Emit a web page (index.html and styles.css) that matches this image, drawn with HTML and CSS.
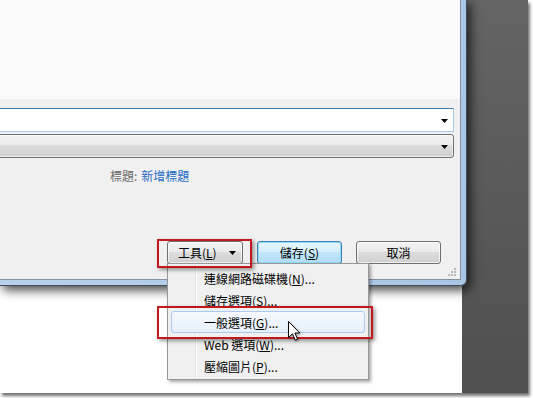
FILE: index.html
```html
<!DOCTYPE html>
<html lang="zh-Hant">
<head>
<meta charset="utf-8">
<title>另存新檔 - 工具</title>
<link rel="stylesheet" href="styles.css">
</head>
<body>
<div class="shot">
  <div class="dialog">
    <div class="client">
      <div class="preview"></div>
      <div class="fields">
        <div class="combo edit"><span class="drop-btn"><svg width="7" height="4" viewBox="0 0 7 4"><path d="M0 0h7L3.5 4z"/></svg></span></div>
        <div class="combo list"><span class="drop-btn"><svg width="7" height="4" viewBox="0 0 7 4"><path d="M0 0h7L3.5 4z"/></svg></span></div>
        <div class="title-row"><span class="lbl">標題:</span><span class="link">新增標題</span></div>
      </div>
      <div class="buttons">
        <div class="btn tools"><span>工具(<u>L</u>)</span><svg class="caret" width="7" height="4" viewBox="0 0 7 4"><path d="M0 0h7L3.5 4z"/></svg></div>
        <div class="btn default">儲存(<u>S</u>)</div>
        <div class="btn">取消</div>
      </div>
      <div class="grip"></div>
    </div>
  </div>
  <div class="paper"></div>

  <div class="menu">
    <div class="item">連線網路磁碟機(<u>N</u>)...</div>
    <div class="item">儲存選項(<u>S</u>)...</div>
    <div class="item hot">一般選項(<u>G</u>)...</div>
    <div class="item">Web 選項(<u>W</u>)...</div>
    <div class="item">壓縮圖片(<u>P</u>)...</div>
  </div>

  <div class="mark mark-tools"></div>
  <div class="mark mark-item"></div>

  <svg class="cursor" width="13" height="21" viewBox="0 0 13 21"><path d="M0.5 0.5V16.5L4.5 12.8L7.2 19.2L9.6 18.2L6.9 12H11.8Z" fill="#fff" stroke="#000" stroke-width="1" stroke-linejoin="miter"/></svg>
</div>
</body>
</html>
```

FILE: styles.css
```css
* { box-sizing: border-box; }

html, body {
  margin: 0;
  padding: 0;
  background: #ffffff;
}

body {
  width: 533px;
  height: 398px;
  overflow: hidden;
  font-family: "Noto Sans CJK TC", "Noto Sans", sans-serif;
  font-size: 12px;
  line-height: 16px;
  color: #000;
}

u { text-decoration: underline; text-underline-offset: 1px; }

.shot {
  position: relative;
  width: 528px;
  height: 393px;
  overflow: hidden;
  display: flex;
  flex-direction: column;
  background: linear-gradient(#646464, #4f4f4f);
  box-shadow: 2px 3px 3px rgba(0, 0, 0, 0.55);
}

/* dialog window */
.dialog {
  position: relative;
  z-index: 2;
  width: 467px;
  padding: 0 5px 5px 0;
  background: linear-gradient(90deg, #b7d1ee, #a9c6e6);
  border-right: 1px solid #434c57;
  border-bottom: 1px solid #434c57;
  border-bottom-right-radius: 6px;
  box-shadow: 3px 4px 11px rgba(0, 0, 0, 0.75);
  flex: none;
}

.client {
  position: relative;
  width: 461px;
  height: 280px;
  background: #f0f0f0;
  border-right: 1px solid #86929f;
  border-bottom: 1px solid #86929f;
  display: flex;
  flex-direction: column;
  padding-bottom: 15px;
}

.preview {
  height: 99px;
  background: #fbfbfb;
  flex: none;
}

.fields {
  display: flex;
  flex-direction: column;
  gap: 2px;
  margin-top: 9px;
}

.combo {
  height: 24px;
  margin-left: -12px;
  margin-right: 6px;
  display: flex;
  justify-content: flex-end;
  align-items: center;
}

.edit {
  background: #ffffff;
  border: 1px solid #a9cbea;
  border-top-color: #3f7bae;
  border-left-color: #8fb4d8;
}

.list {
  border: 1px solid #707070;
  border-radius: 3px;
  background: linear-gradient(#f2f2f2 0%, #ebebeb 45%, #dcdcdc 50%, #cfcfcf 100%);
  box-shadow: inset 0 0 0 1px rgba(255, 255, 255, 0.6);
}

.drop-btn {
  width: 17px;
  display: flex;
  justify-content: center;
  padding-top: 1px;
}

.title-row {
  margin-top: 8px;
  padding-left: 110px;
  display: flex;
  gap: 4px;
  line-height: 16px;
}

.lbl { color: #6d6d6d; }
.link { color: #1f6dc6; }

.buttons {
  margin-top: auto;
  display: flex;
  justify-content: flex-end;
  gap: 14px;
  padding-right: 19px;
}

.btn {
  width: 85px;
  height: 23px;
  border: 1px solid #707070;
  border-radius: 3px;
  background: linear-gradient(#f2f2f2 0%, #ebebeb 45%, #dddddd 50%, #cfcfcf 100%);
  box-shadow: inset 0 0 0 1px rgba(255, 255, 255, 0.7);
  display: flex;
  align-items: center;
  justify-content: center;
  line-height: 16px;
}

.btn.tools {
  width: 76px;
  justify-content: flex-start;
  padding-left: 10px;
  padding-right: 6px;
}

.btn.tools .caret {
  margin-left: auto;
  margin-top: 1px;
}

.btn.default {
  border-color: #3c7fb1;
  background: linear-gradient(#e8f6fd 0%, #d6effc 45%, #c0e6fb 50%, #b2dcf6 100%);
  box-shadow: inset 0 0 0 1px #8fdcfb;
}

.grip {
  position: absolute;
  right: 4px;
  bottom: 3px;
  width: 2px;
  height: 2px;
  background: #b9b9b9;
  box-shadow:
    -3px 0 0 #b9b9b9, -6px 0 0 #b9b9b9,
    0 -3px 0 #b9b9b9, -3px -3px 0 #b9b9b9,
    0 -6px 0 #b9b9b9;
}

.paper {
  width: 462px;
  flex: 1;
  background: #ffffff;
}

/* context menu */
.menu {
  position: absolute;
  z-index: 3;
  left: 167px;
  top: 263px;
  width: 202px;
  height: 117px;
  background: #f0f0f0;
  border: 1px solid #979797;
  padding: 3px 3px 2px 3px;
  box-shadow: 2px 2px 3px rgba(0, 0, 0, 0.35);
}

.menu::before {
  content: "";
  position: absolute;
  left: 27px;
  top: 1px;
  bottom: 1px;
  width: 1px;
  background: #e2e3e3;
  border-right: 1px solid #ffffff;
  box-sizing: content-box;
}

.item {
  position: relative;
  height: 22px;
  line-height: 22px;
  padding-left: 32px;
  color: #000;
  border: 1px solid transparent;
  border-radius: 3px;
}

.item.hot {
  border-color: #a9cbf1;
  background: linear-gradient(#f6fafe, #e7f0fa);
}

/* red highlight marks */
.mark {
  position: absolute;
  z-index: 4;
  border: 2px solid #c0181e;
  box-shadow: 2px 2px 4px rgba(0, 0, 0, 0.4);
}

.mark-tools {
  left: 157px;
  top: 239px;
  width: 95px;
  height: 29px;
}

.mark-item {
  left: 157px;
  top: 306px;
  width: 216px;
  height: 33px;
}

.cursor {
  position: absolute;
  z-index: 5;
  left: 288px;
  top: 321px;
  filter: drop-shadow(1px 1px 1px rgba(0, 0, 0, 0.35));
}
```
